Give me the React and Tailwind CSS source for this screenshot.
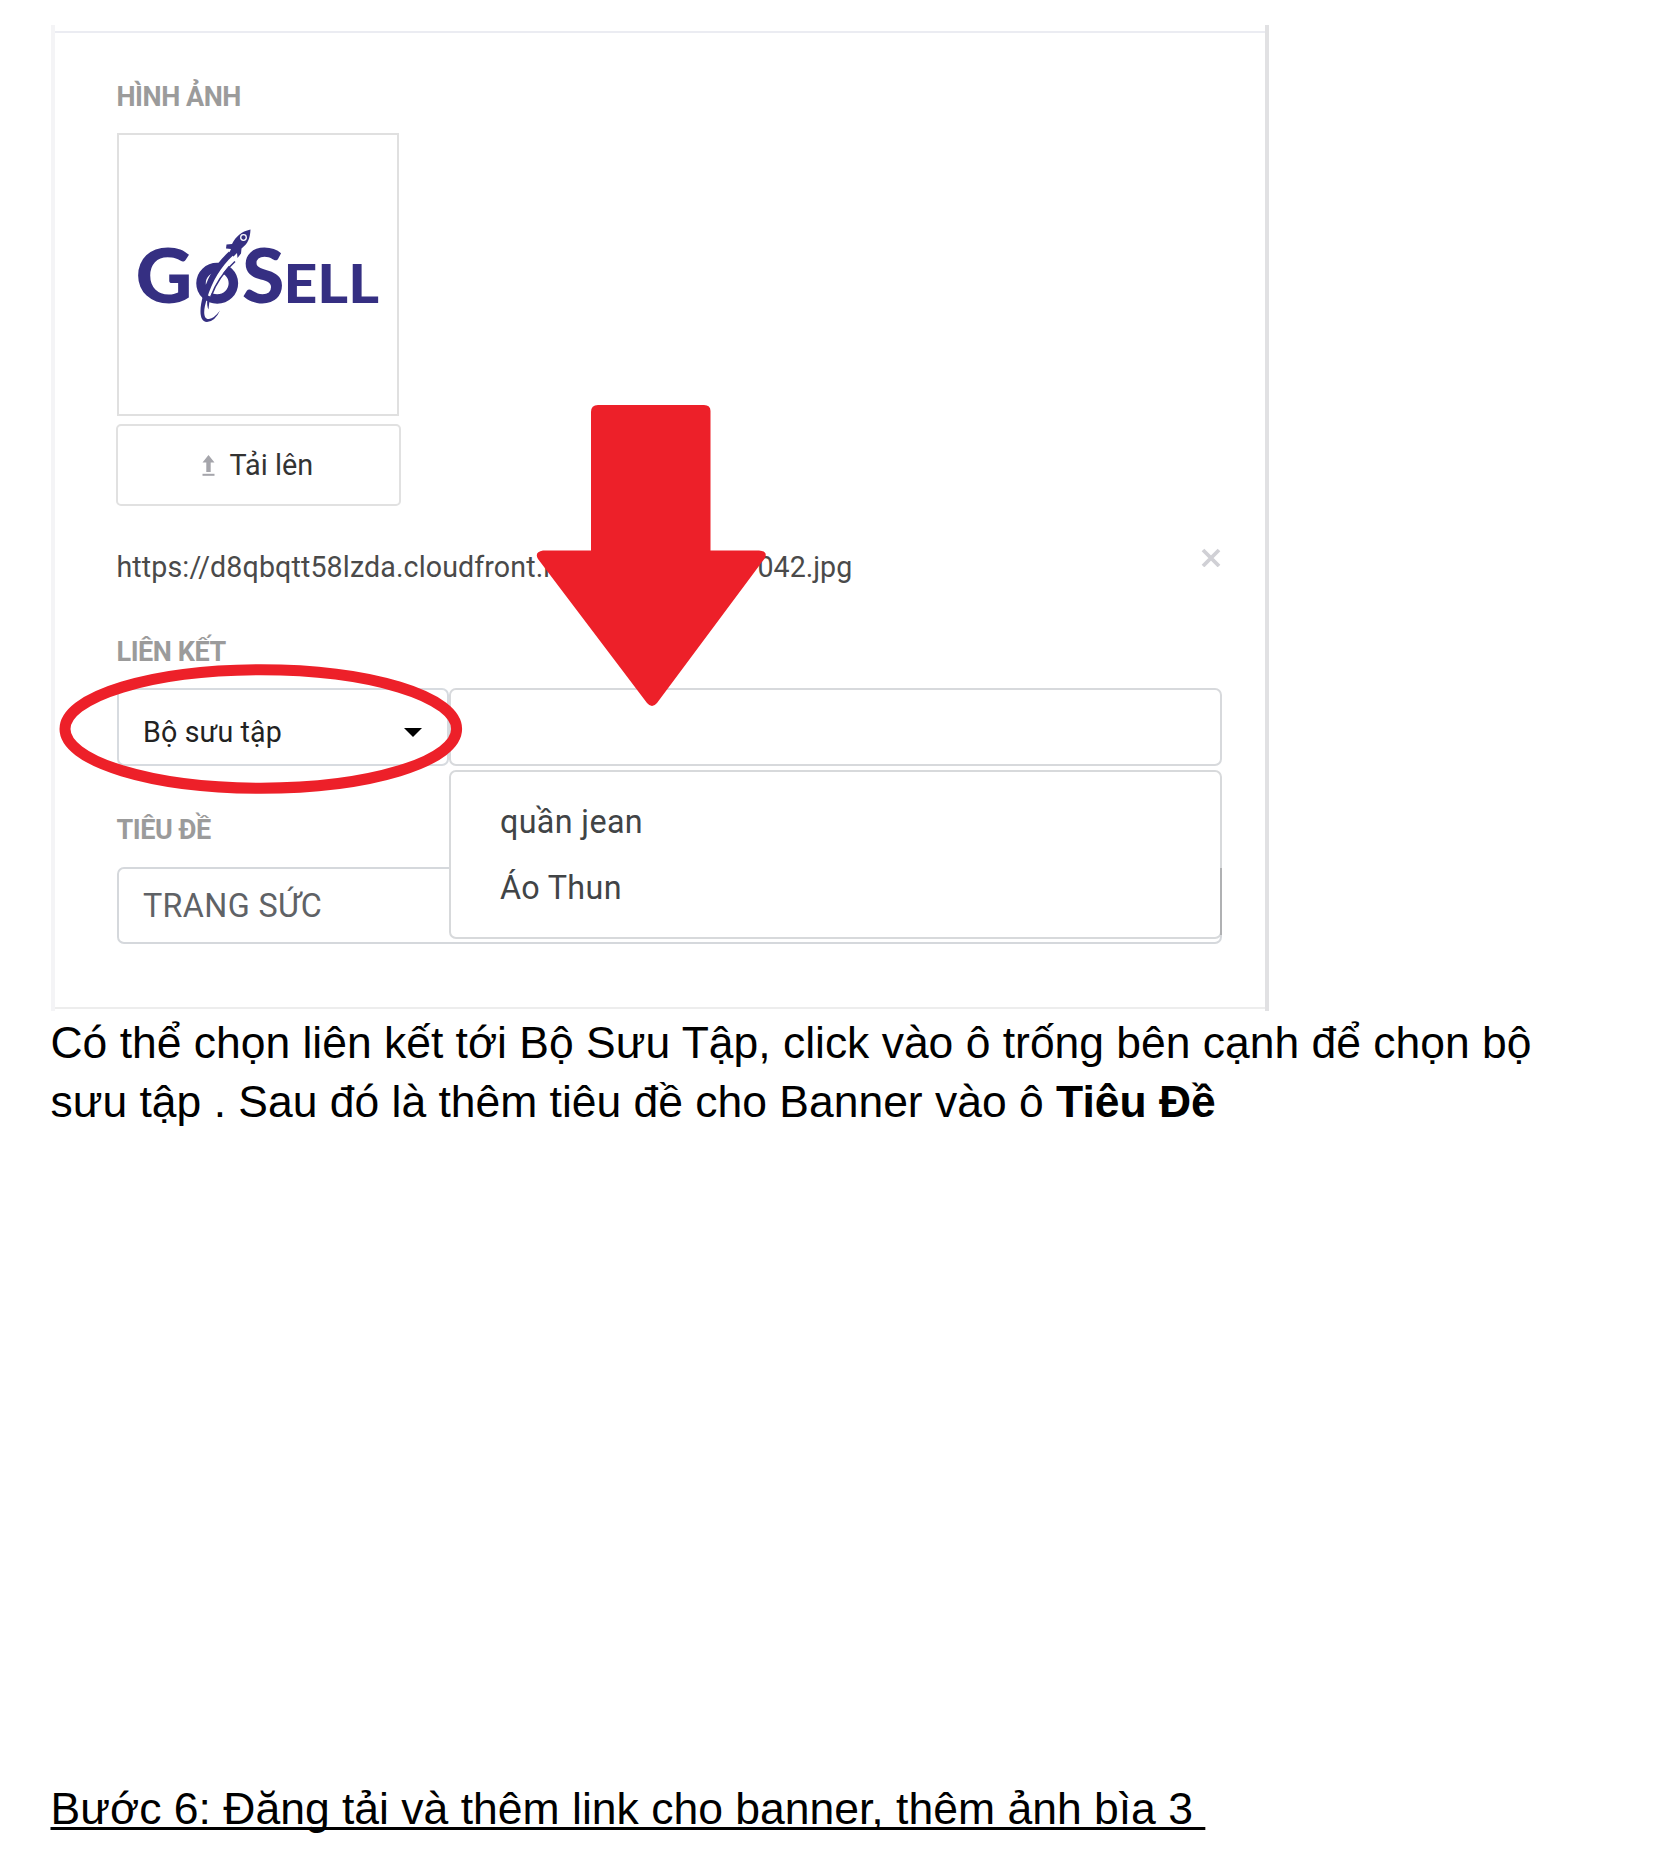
const label = "font-bold text-[27px] tracking-[-0.450px] leading-8 text-[#9b9b9b] whitespace-nowrap";

function Logo() {
  return (
    <svg className="block h-full w-full" viewBox="119 136 278 278" fill="#352f82">
      <g fontFamily="Lato, sans-serif" fontWeight="900">
        <text x="135.500" y="303" fontSize="77" textLength="57" lengthAdjust="spacingAndGlyphs">G</text>
        <text x="242" y="303" fontSize="77" textLength="42.500" lengthAdjust="spacingAndGlyphs">S</text>
        <text x="283.500" y="303" fontSize="53" textLength="95.500" lengthAdjust="spacingAndGlyphs">ELL</text>
      </g>
      <ellipse cx="217.200" cy="283.800" rx="16.200" ry="15.800" fill="none" stroke="#352f82" strokeWidth="9.500" />
      <path d="M236 256 C224 266 214 280 208 296" fill="none" stroke="#fff" strokeWidth="5" />
      <path d="M229 252 L233 256 C221 267 212 282 207 299 C203 311 203 320 209 319.500 Q214 319 220 311 Q215 322 207 322.500 C198 322 200 307 203 296 C206 280 214 266 229 252 Z" />
      <path d="M235 262 C225 271 216 283 211 297" fill="none" stroke="#352f82" strokeWidth="1.600" />
      <path d="M207.500 300 C206.500 304 207.500 308 208.500 310 L209.500 301 Z" />
      <path d="M250.500 230 C241 232 236 237 232 244.500 L226.500 245 L226 249 L231 249.500 L229 254 L233.500 257 L237 253.500 L237.500 258.500 L241 254 L241.500 249 C248 244 250 239 250.500 230 Z" />
      <circle cx="243.500" cy="238" r="2.800" fill="none" stroke="#fff" strokeWidth="1.300" />
    </svg>
  );
}

function UploadIcon() {
  return (
    <svg className="h-[21px] w-[13px]" viewBox="0 0 13 21" fill="#a5a5ab">
      <path d="M6.500 0 L12.500 7.500 H8.700 V17 H4.300 V7.500 H.500 Z" />
      <rect x=".500" y="18.800" width="12" height="2" />
    </svg>
  );
}

function Arrow() {
  return (
    <svg className="absolute left-[536px] top-[404px] h-[303px] w-[231px]" viewBox="536 404 231 303" fill="#ed2029">
      <path d="M598 405 H704 Q710.500 405 710.500 411 V550.500 H759 Q768 551 765 558 L657 703 Q652 709 647 703 L538 559 Q534 552 543 550.500 H591 V412 Q591 405 598 405 Z" />
    </svg>
  );
}

function Ring() {
  return (
    <svg className="absolute left-[59px] top-[664px] h-[131px] w-[404px]" viewBox="59 664 404 131">
      <ellipse cx="260.800" cy="729" rx="195.800" ry="59.200" fill="none" stroke="#ed2029" strokeWidth="11" />
    </svg>
  );
}

export default function App() {
  return (
    <main className="relative h-[1856px] w-[1653px] overflow-hidden bg-white pl-[50.500px] pt-[25px] font-['Liberation_Sans',sans-serif] text-black">
      <section className="h-[986px] w-[1218px] border-x-4 border-l-[#f4f4f6] border-r-[#e1e1e3] pt-[6px] font-[Roboto,sans-serif]">
        <div className="h-[978px] border-t-2 border-b-2 border-t-[#ebecf2] border-b-[#ededed] pl-[62px] pt-[48px]">
          <div className={label}>HÌNH ẢNH</div>
          <div className="mt-[20px] h-[283px] w-[282px] border-2 border-[#e0e0e0]">
            <Logo />
          </div>
          <button className="-ml-[1px] mt-[8px] flex h-[82px] w-[285px] items-center rounded-[5px] border-2 border-[#e1e1e1] pl-[84px] text-[28.800px] text-[#333]">
            <UploadIcon />
            <span className="ml-[15px] mt-[2px] whitespace-nowrap">Tải lên</span>
          </button>
          <div className="mt-[41px] flex h-[40px] w-[1105px] text-[28.600px] leading-[40px] text-[#4a4a4a]">
            <span className="w-[641px] whitespace-nowrap tracking-[0.120px]">https://d8qbqtt58lzda.cloudfront.net/</span>
            <span className="whitespace-nowrap">042.jpg</span>
            <svg className="ml-auto mr-[1px] h-[20px] w-[20px]" viewBox="0 0 20 20" stroke="#d0d0d5" strokeWidth="3.800">
              <path d="M2 3 L18 19 M18 3 L2 19" />
            </svg>
          </div>
          <div className={`${label} mt-[49px]`}>LIÊN KẾT</div>
          <div className="ml-[0.500px] mt-[20px] flex h-[78px] w-[1105px]">
            <div className="flex w-[332px] items-center rounded-[7px] border-2 border-[#d7dbe0] pl-[24px] pr-[25px] pt-[10px] text-[28.600px] tracking-[0.150px] text-[#222]">
              <span className="whitespace-nowrap">Bộ sưu tập</span>
              <svg className="ml-auto h-[9px] w-[18px]" viewBox="0 0 18 9"><path d="M0 0 H18 L9 9 Z" /></svg>
            </div>
            <div className="flex-1 rounded-[7px] border-2 border-[#d7d9dc]" />
          </div>
          <div className={`${label} mt-[48px]`}>TIÊU ĐỀ</div>
          <div className="relative ml-[0.500px] mt-[21px] h-[77px] w-[1105px] rounded-[7px] border-2 border-[#d5d8dc] pl-[24px] text-[32.300px] tracking-[0.350px] leading-[74px] text-[#5f6266]">
            TRANG SỨC
            <div className="absolute -right-[2px] bottom-[3px] h-[169px] w-[773px] rounded-[7px] border-2 border-[#d7d9db] bg-white pl-[49px] pt-[17px] text-[32.300px] leading-[66px] text-[#414446]">
              <div>quần jean</div>
              <div>Áo Thun</div>
              <div className="absolute -right-[2px] bottom-[2px] h-[67px] w-[2px] bg-[#b0b1b3]" />
            </div>
          </div>
        </div>
      </section>
      <p className="mt-[2px] whitespace-nowrap text-[44.450px] leading-[59px]">
        Có thể chọn liên kết tới Bộ Sưu Tập, click vào ô trống bên cạnh để chọn bộ<br />
        sưu tập . Sau đó là thêm tiêu đề cho Banner vào ô <b>Tiêu Đề</b>
      </p>
      <p className="mt-[648px] whitespace-pre text-[44.500px] leading-[59px] underline decoration-[3px] underline-offset-[3px] [text-decoration-skip-ink:none]">{"Bước 6: Đăng tải và thêm link cho banner, thêm ảnh bìa 3 "}</p>
      <Arrow />
      <Ring />
    </main>
  );
}
